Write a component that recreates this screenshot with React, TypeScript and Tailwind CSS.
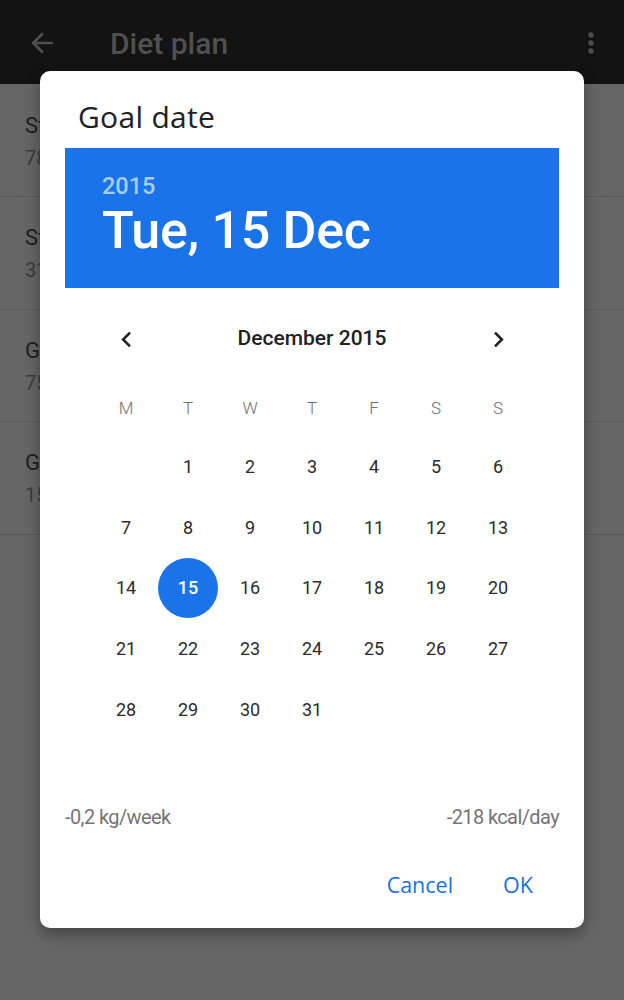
import React from "react";

const rows = [
  { title: "Start weight", sub: "78,0 kg" },
  { title: "Start date", sub: "31 Oct 2015" },
  { title: "Goal weight", sub: "75,0 kg" },
  { title: "Goal date", sub: "15 Dec 2015" },
];

const weekdays = ["M", "T", "W", "T", "F", "S", "S"];

function Chevron({ dir }: { dir: "left" | "right" }) {
  return (
    <svg width="31" height="31" viewBox="0 0 24 24" fill="#202124">
      {dir === "left" ? (
        <path d="M15.41 7.41L14 6l-6 6 6 6 1.41-1.41L10.83 12z" />
      ) : (
        <path d="M8.59 16.59L10 18l6-6-6-6-1.41 1.41L13.17 12z" />
      )}
    </svg>
  );
}

export default function App() {
  const days: (number | null)[] = [null];
  for (let i = 1; i <= 31; i++) days.push(i);

  return (
    <div
      className="relative w-[624px] h-[1000px] overflow-hidden bg-[#666666]"
      style={{ fontFamily: "Roboto, 'Noto Sans', sans-serif" }}
    >
      {/* Top app bar (dimmed) */}
      <div className="h-[84px] bg-[#131313] flex items-center">
        <div className="w-[86px] flex justify-center">
          <svg width="32" height="32" viewBox="0 0 24 24" fill="#4f4f4f" className="ml-[-2px] mt-[2px]">
            <path d="M20 11H7.83l5.59-5.59L12 4l-8 8 8 8 1.41-1.41L7.83 13H20v-2z" />
          </svg>
        </div>
        <div className="ml-[24px] mt-[4px] text-[30px] font-medium text-[#505050] leading-none">Diet plan</div>
        <div className="ml-auto mr-[17px] mt-[2px]">
          <svg width="32" height="32" viewBox="0 0 24 24" fill="#4f4f4f">
            <path d="M12 8c1.1 0 2-.9 2-2s-.9-2-2-2-2 .9-2 2 .9 2 2 2zm0 2c-1.1 0-2 .9-2 2s.9 2 2 2 2-.9 2-2-.9-2-2-2zm0 6c-1.1 0-2 .9-2 2s.9 2 2 2 2-.9 2-2-.9-2-2-2z" />
          </svg>
        </div>
      </div>

      {/* Background list (dimmed, mostly covered by the dialog) */}
      <div>
        {rows.map((r, i) => (
          <div
            key={i}
            className={`border-b border-[#5a5a5a] pl-[25px] ${i === 0 ? "h-[113px] pt-[29px]" : "h-[112.5px] pt-[28px]"}`}
          >
            <div className="text-[22px] leading-[26px] text-[#202020]">{r.title}</div>
            <div className="text-[20px] leading-[26px] mt-[6px] text-[#3c3c3c]">{r.sub}</div>
          </div>
        ))}
      </div>

      {/* Dialog */}
      <div className="absolute left-[40px] top-[71px] w-[544px] h-[857px] rounded-[10px] bg-white shadow-[0_6px_16px_rgba(0,0,0,0.35)] flex flex-col">
        <div
          className="pt-[30px] pl-[38px] h-[62px] text-[30px] leading-[32px] font-medium text-[#202124] tracking-[0.3px]"
          style={{ fontFamily: "'Open Sans', sans-serif" }}
        >
          Goal date
        </div>

        <div className="mt-[15px] mx-[25px] h-[140px] bg-[#1a73e8] pl-[37px] pt-[24px]">
          <div className="text-[23.5px] leading-[28px] text-[#a9cbf6] font-medium">2015</div>
          <div className="mt-[2px] text-[52px] leading-[58px] text-white font-medium tracking-[-0.3px]">Tue, 15 Dec</div>
        </div>

        <div className="mx-auto w-[434px]">
          <div className="mt-[31px] h-[40px] flex items-center">
            <div className="w-[62px] flex justify-center">
              <Chevron dir="left" />
            </div>
            <div className="flex-1 text-center text-[21px] font-medium text-[#202124]">December 2015</div>
            <div className="w-[62px] flex justify-center">
              <Chevron dir="right" />
            </div>
          </div>

          <div className="mt-[30px] h-[40px] grid grid-cols-7 items-center">
            {weekdays.map((d, i) => (
              <div key={i} className="text-center text-[17px] font-light text-[#6f6f6f]">
                {d}
              </div>
            ))}
          </div>

          <div className="mt-[7px] grid grid-cols-7 auto-rows-[60.75px]">
            {days.map((d, i) => (
              <div key={i} className="flex items-center justify-center">
                {d === 15 ? (
                  <div className="w-[60px] h-[60px] rounded-full bg-[#1a73e8] flex items-center justify-center text-white text-[18px] font-medium">
                    15
                  </div>
                ) : d ? (
                  <span className="text-[18px] text-[#2b2b2b]">{d}</span>
                ) : null}
              </div>
            ))}
          </div>
        </div>

        <div className="mt-[63px] px-[25px] h-[28px] flex items-center justify-between text-[20px] text-[#757575] tracking-[-0.6px]">
          <span>-0,2 kg/week</span>
          <span>-218 kcal/day</span>
        </div>

        <div
          className="mt-[34px] h-[40px] flex items-center justify-end pr-[51px] gap-[50px] text-[21.5px] font-medium text-[#1a6fdc]"
          style={{ fontFamily: "'Open Sans', sans-serif" }}
        >
          <span>Cancel</span>
          <span>OK</span>
        </div>
      </div>
    </div>
  );
}
